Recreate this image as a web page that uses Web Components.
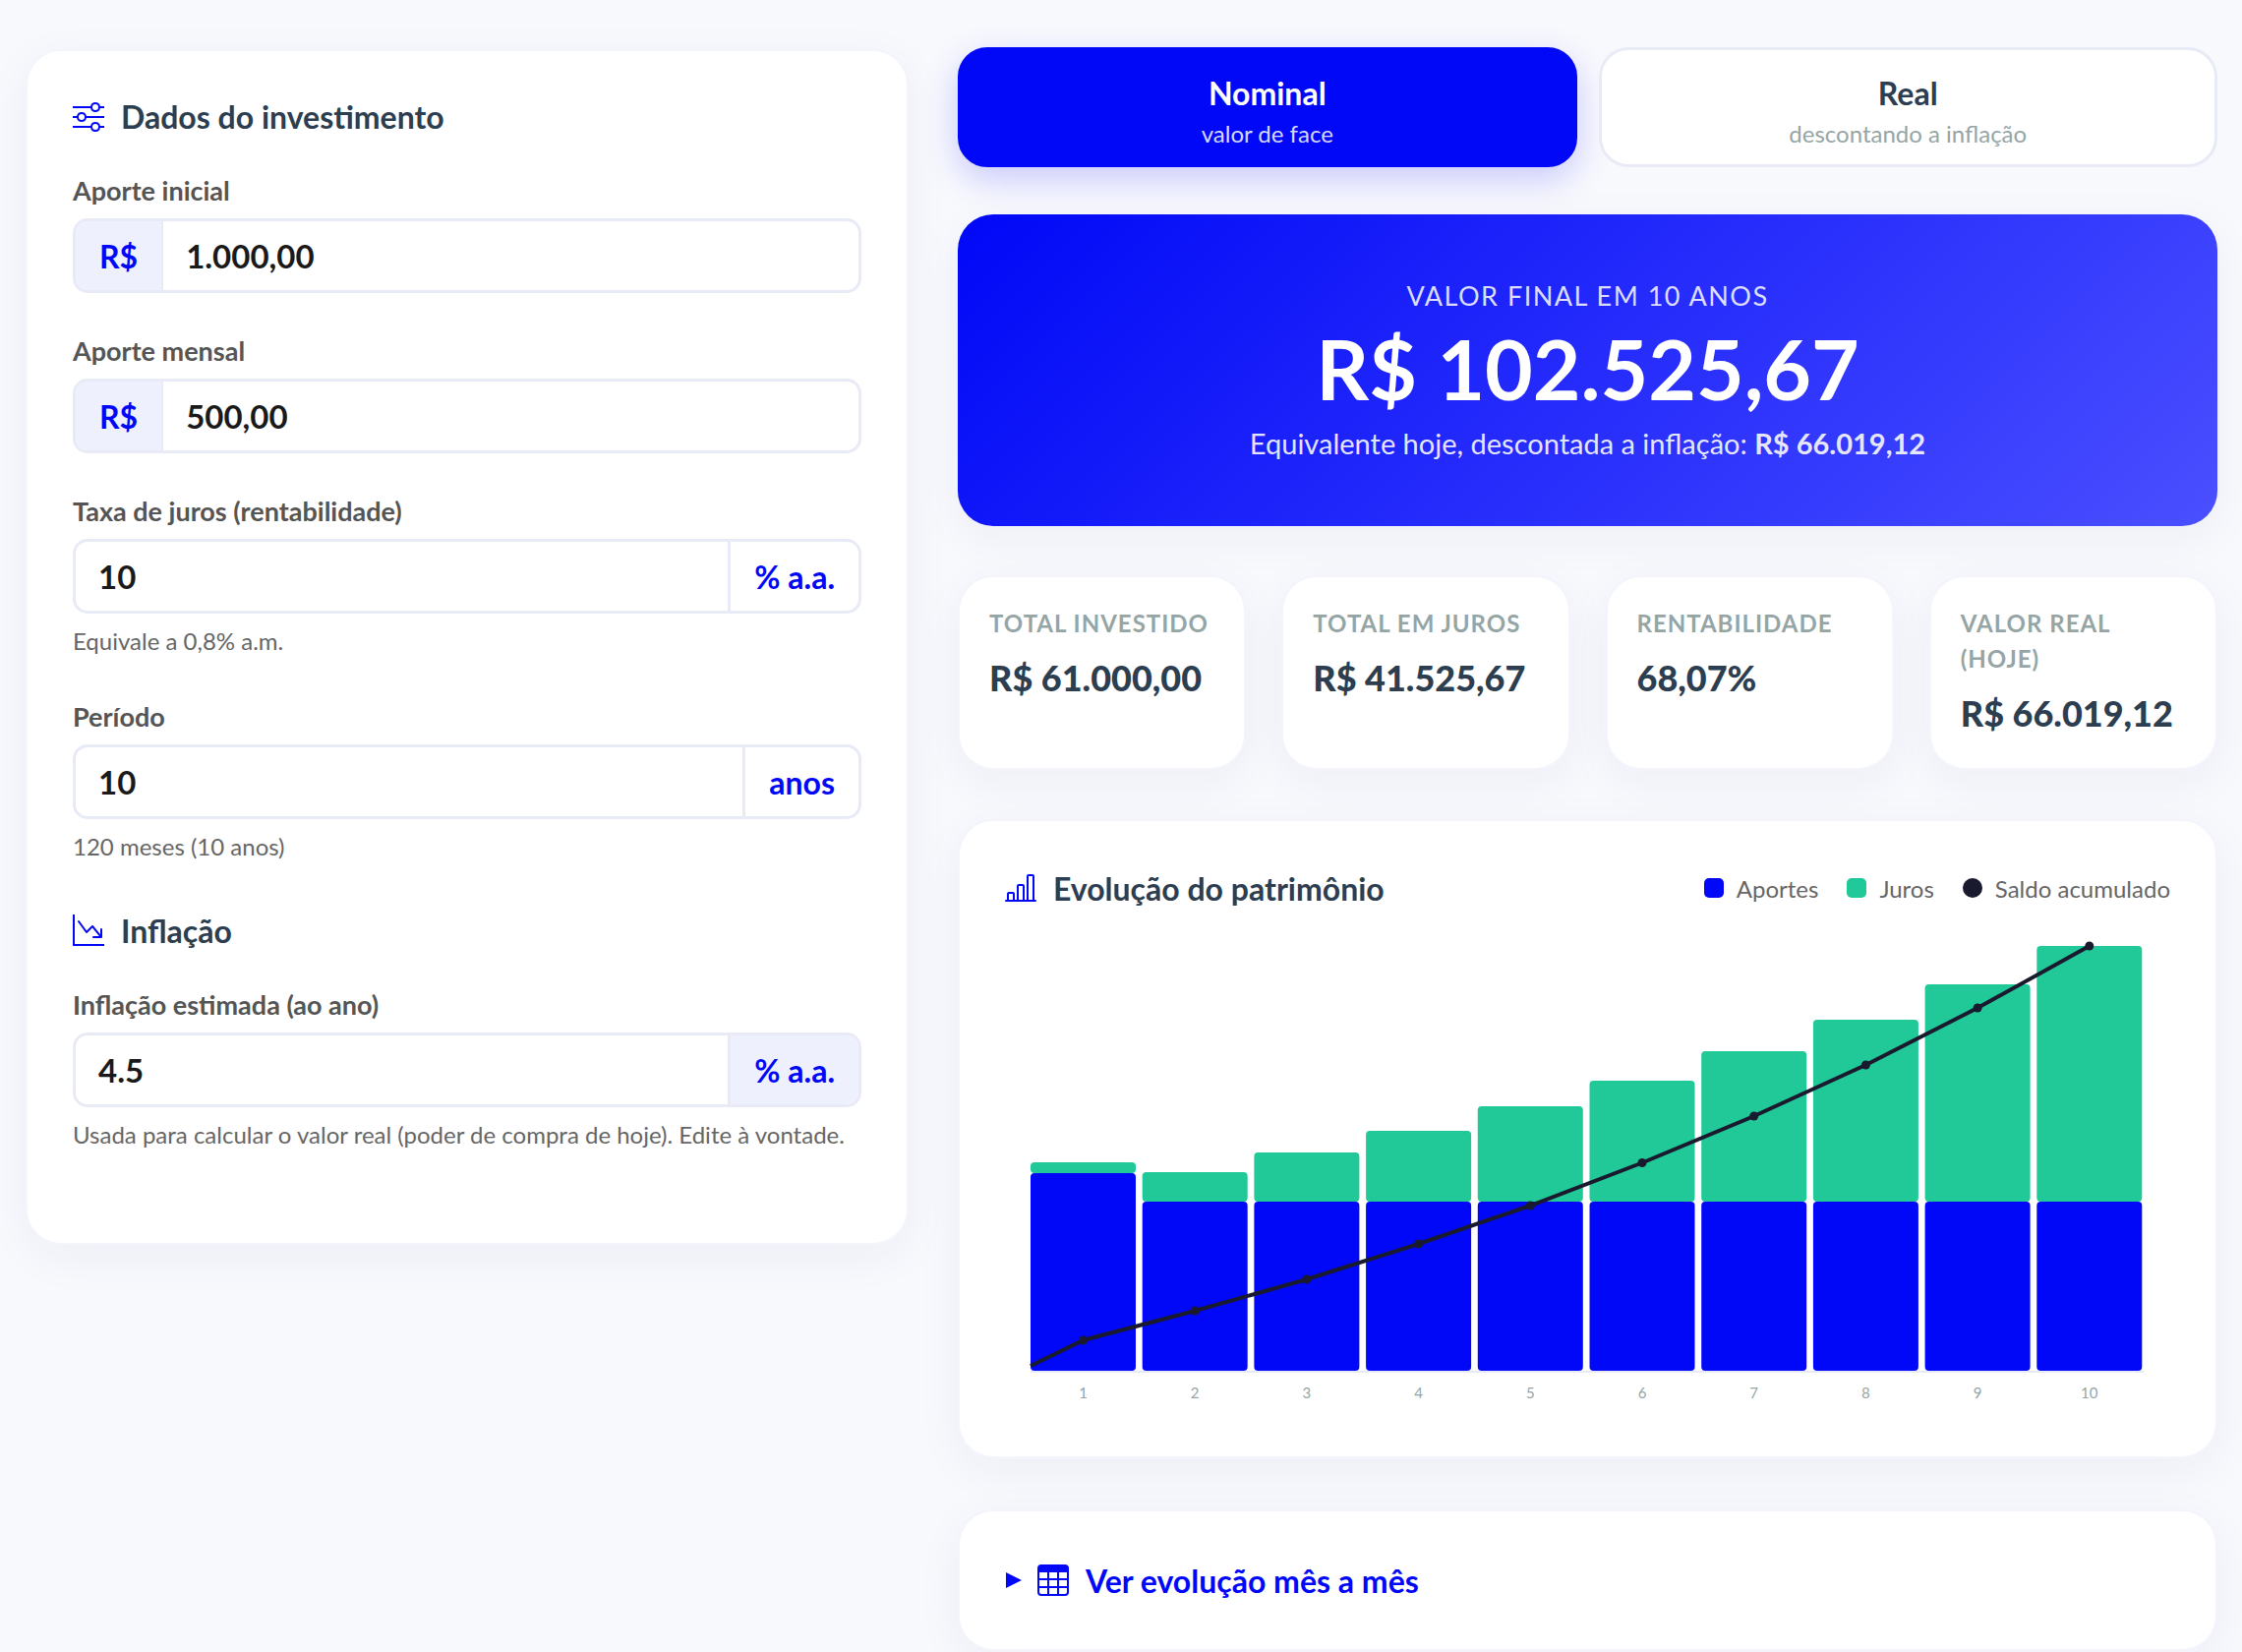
<!DOCTYPE html>
<html lang="pt-BR">
<head>
<meta charset="utf-8">
<title>Simulador</title>
<style>
    html, body { margin: 0; background: #f8f9fd; }
    body { font-family: "Lato", "Noto Sans", sans-serif; color: #2c3e50; }
</style>
</head>
<body>
<sim-page>
    <app-card slot="side" class="side">
        <section-title icon="sliders">Dados do investimento</section-title>
        <input-field label="Aporte inicial" prefix="R$">1.000,00</input-field>
        <input-field label="Aporte mensal" prefix="R$">500,00</input-field>
        <input-field label="Taxa de juros (rentabilidade)" suffix="% a.a." hint="Equivale a 0,8% a.m.">10</input-field>
        <input-field label="Período" suffix="anos" hint="120 meses (10 anos)">10</input-field>
        <section-title icon="graphDown" class="sub">Inflação</section-title>
        <input-field label="Inflação estimada (ao ano)" suffix="% a.a." shaded hint="Usada para calcular o valor real (poder de compra de hoje). Edite à vontade.">4.5</input-field>
    </app-card>

    <mode-tabs slot="main">
        <mode-tab active caption="valor de face">Nominal</mode-tab>
        <mode-tab caption="descontando a inflação">Real</mode-tab>
    </mode-tabs>

    <hero-result slot="main"
        label="VALOR FINAL EM 10 ANOS"
        amount="R$ 102.525,67"
        note="Equivalente hoje, descontada a inflação:"
        real="R$ 66.019,12"></hero-result>

    <stat-grid slot="main">
        <stat-card label="TOTAL INVESTIDO">R$ 61.000,00</stat-card>
        <stat-card label="TOTAL EM JUROS">R$ 41.525,67</stat-card>
        <stat-card label="RENTABILIDADE">68,07%</stat-card>
        <stat-card label="VALOR REAL (HOJE)">R$ 66.019,12</stat-card>
    </stat-grid>

    <wealth-chart slot="main"></wealth-chart>

    <month-details slot="main">Ver evolução mês a mês</month-details>
</sim-page>

<script>
const BLUE = '#0008f7';
const GREEN = '#21c998';
const INK = '#1a1a2e';

const icons = {
    sliders: '<path fill-rule="evenodd" d="M11.5 2a1.5 1.5 0 1 0 0 3 1.5 1.5 0 0 0 0-3zM9.05 3a2.5 2.5 0 0 1 4.9 0H16v1h-2.05a2.5 2.5 0 0 1-4.9 0H0V3h9.05zM4.5 7a1.5 1.5 0 1 0 0 3 1.5 1.5 0 0 0 0-3zM2.05 8a2.5 2.5 0 0 1 4.9 0H16v1H6.95a2.5 2.5 0 0 1-4.9 0H0V8h2.05zm9.45 4a1.5 1.5 0 1 0 0 3 1.5 1.5 0 0 0 0-3zm-2.45 1a2.5 2.5 0 0 1 4.9 0H16v1h-2.05a2.5 2.5 0 0 1-4.9 0H0v-1h9.05z"/>',
    graphDown: '<path fill-rule="evenodd" d="M0 0h1v15h15v1H0V0zm10 11.5a.5.5 0 0 0 .5.5h4a.5.5 0 0 0 .5-.5v-4a.5.5 0 0 0-1 0v2.6l-3.613-4.417a.5.5 0 0 0-.74-.037L7.06 8.233 3.404 3.206a.5.5 0 0 0-.808.588l4 5.5a.5.5 0 0 0 .758.06l2.609-2.61L13.445 11H10.5a.5.5 0 0 0-.5.5z"/>',
    barChart: '<path d="M11 2a1 1 0 0 1 1-1h2a1 1 0 0 1 1 1v12h.5a.5.5 0 0 1 0 1H.5a.5.5 0 0 1 0-1H1v-3a1 1 0 0 1 1-1h2a1 1 0 0 1 1 1v3h1V7a1 1 0 0 1 1-1h2a1 1 0 0 1 1 1v7h1V2zm1 12h2V2h-2v12zm-3 0V7H7v7h2zm-5 0v-3H2v3h2z"/>',
    table: '<path d="M0 2a2 2 0 0 1 2-2h12a2 2 0 0 1 2 2v12a2 2 0 0 1-2 2H2a2 2 0 0 1-2-2V2zm15 2h-4v3h4V4zm0 4h-4v3h4V8zm0 4h-4v3h3a1 1 0 0 0 1-1v-2zm-5 3v-3H6v3h4zm-5 0v-3H1v2a1 1 0 0 0 1 1h3zm-4-4h4V8H1v3zm0-4h4V4H1v3zm5-3v3h4V4H6zm4 4H6v3h4V8z"/>'
};

const icon = name => `<svg width="32" height="32" viewBox="0 0 16 16" fill="${BLUE}">${icons[name]}</svg>`;

// small helper so each element just declares its markup
class Base extends HTMLElement {
    constructor(html) {
        super();
        this.root = this.attachShadow({mode: 'open'});
        this.root.innerHTML = html;
    }
    fill(selector, text) {
        const el = this.root.querySelector(selector);
        if (text) el.textContent = text;
        else el.remove();
    }
}

customElements.define('sim-page', class extends Base {
    constructor() {
        super(`
        <style>
            :host {
                display: grid;
                grid-template-columns: 898px 1281px;
                column-gap: 50px;
                align-items: start;
                padding: 48px 25px 0 26px;
                box-sizing: border-box;
                width: 2280px;
                height: 1680px;
                overflow: hidden;
            }
            .main { display: flex; flex-direction: column; }
        </style>
        <slot name="side"></slot>
        <div class="main"><slot name="main"></slot></div>`);
    }
});

customElements.define('app-card', class extends Base {
    constructor() {
        super(`
        <style>
            :host {
                display: block;
                box-sizing: border-box;
                height: 1216px;
                margin-top: 2px;
                padding: 46px 46px 0;
                background: #fff;
                border: 2px solid #f3f4fc;
                border-radius: 36px;
                box-shadow: 0 12px 48px rgba(30, 40, 120, .05);
            }
        </style>
        <slot></slot>`);
    }
});

customElements.define('section-title', class extends Base {
    constructor() {
        super(`
        <style>
            :host(.sub) { margin-top: 47px; }
            :host {
                display: flex;
                align-items: center;
                gap: 17px;
                height: 40px;
                margin-bottom: 39px;
                font-size: 32px;
                font-weight: 700;
                color: #2c3e50;
            }
            svg { flex: none; }
        </style>
        <span class="ico"></span><span><slot></slot></span>`);
        this.root.querySelector('.ico').style.display = 'flex';
    }
    connectedCallback() {
        this.root.querySelector('.ico').innerHTML = icon(this.getAttribute('icon'));
    }
});

customElements.define('input-field', class extends Base {
    constructor() {
        super(`
        <style>
            :host { display: block; margin-bottom: 42px; }
            :host(:last-child) { margin-bottom: 0; }
            label {
                display: block;
                height: 34px;
                line-height: 34px;
                margin-bottom: 11px;
                font-size: 27px;
                font-weight: 700;
                color: #555;
            }
            .box {
                display: flex;
                box-sizing: border-box;
                height: 76px;
                background: #fff;
                border: 3px solid #e8eaf6;
                border-radius: 15px;
                overflow: hidden;
            }
            .value {
                flex: 1;
                display: flex;
                align-items: center;
                padding: 0 23px;
                font-size: 33px;
                font-weight: 700;
                color: #1a1a1a;
            }
            .addon {
                display: flex;
                align-items: center;
                padding: 0 24px;
                font-size: 32px;
                font-weight: 700;
                color: ${BLUE};
            }
            .prefix { background: #eef0fd; border-right: 2px solid #e8eaf6; }
            .suffix { border-left: 3px solid #e8eaf6; }
            :host([shaded]) .suffix { background: #eef0fd; }
            .hint {
                margin-top: 9px;
                font-size: 24px;
                line-height: 37px;
                color: #666;
            }
        </style>
        <label></label>
        <div class="box">
            <span class="addon prefix"></span>
            <span class="value"><slot></slot></span>
            <span class="addon suffix"></span>
        </div>
        <div class="hint"></div>`);
    }
    connectedCallback() {
        this.fill('label', this.getAttribute('label'));
        this.fill('.prefix', this.getAttribute('prefix'));
        this.fill('.suffix', this.getAttribute('suffix'));
        this.fill('.hint', this.getAttribute('hint'));
    }
});

customElements.define('mode-tabs', class extends Base {
    constructor() {
        super(`
        <style>
            :host { display: grid; grid-template-columns: 1fr 1fr; gap: 22px; margin-bottom: 48px; }
        </style>
        <slot></slot>`);
    }
});

customElements.define('mode-tab', class extends Base {
    constructor() {
        super(`
        <style>
            :host {
                display: flex;
                flex-direction: column;
                align-items: center;
                box-sizing: border-box;
                height: 122px;
                padding-top: 24px;
                background: #fff;
                border: 3px solid #e8eaf6;
                border-radius: 30px;
                color: #2c3e50;
            }
            :host([active]) {
                background: ${BLUE};
                border-color: ${BLUE};
                color: #fff;
                box-shadow: 0 12px 36px rgba(0, 8, 247, .2);
            }
            .title { font-size: 32px; font-weight: 700; line-height: 40px; }
            .caption { margin-top: 6px; font-size: 24px; line-height: 30px; color: #95a5a6; }
            :host([active]) .caption { color: rgba(255, 255, 255, .85); }
        </style>
        <div class="title"><slot></slot></div>
        <div class="caption"></div>`);
    }
    connectedCallback() {
        this.fill('.caption', this.getAttribute('caption'));
    }
});

customElements.define('hero-result', class extends Base {
    constructor() {
        super(`
        <style>
            :host {
                display: block;
                box-sizing: border-box;
                height: 317px;
                margin-bottom: 50px;
                padding-top: 63px;
                text-align: center;
                color: #fff;
                background: linear-gradient(135deg, ${BLUE}, #4a4fff);
                border-radius: 36px;
                box-shadow: 0 12px 48px rgba(30, 40, 120, .05);
            }
            .label { font-size: 27px; line-height: 40px; letter-spacing: 1.5px; color: rgba(255, 255, 255, .85); }
            .amount { margin-top: 4px; font-size: 84px; line-height: 100px; font-weight: 700; }
            .note { margin-top: 4px; font-size: 29px; line-height: 44px; color: rgba(255, 255, 255, .9); }
            b { font-weight: 700; }
        </style>
        <div class="label"></div>
        <div class="amount"></div>
        <div class="note"><span></span> <b></b></div>`);
    }
    connectedCallback() {
        this.fill('.label', this.getAttribute('label'));
        this.fill('.amount', this.getAttribute('amount'));
        this.fill('.note span', this.getAttribute('note'));
        this.fill('.note b', this.getAttribute('real'));
    }
});

customElements.define('stat-grid', class extends Base {
    constructor() {
        super(`
        <style>
            :host { display: grid; grid-template-columns: repeat(4, 1fr); gap: 36px; margin-bottom: 50px; }
        </style>
        <slot></slot>`);
    }
});

customElements.define('stat-card', class extends Base {
    constructor() {
        super(`
        <style>
            :host {
                display: block;
                box-sizing: border-box;
                height: 198px;
                padding: 29px 30px 0;
                background: #fff;
                border: 2px solid #f3f4fc;
                border-radius: 36px;
                box-shadow: 0 12px 48px rgba(30, 40, 120, .05);
            }
            .label { font-size: 24px; line-height: 36px; font-weight: 700; letter-spacing: 1px; color: #95a5a6; }
            .value { margin-top: 13px; font-size: 36px; line-height: 48px; font-weight: 900; color: #2c3e50; white-space: nowrap; }
        </style>
        <div class="label"></div>
        <div class="value"><slot></slot></div>`);
    }
    connectedCallback() {
        this.fill('.label', this.getAttribute('label'));
    }
});

// bars are [top of juros, top of aportes], line is the saldo at each year end
const BARS = [[1181, 1192], [1191, 1221], [1171, 1221], [1149, 1221], [1124, 1221],
              [1098, 1221], [1068, 1221], [1036, 1221], [1000, 1221], [961, 1221]];
const SALDO = [1362, 1332, 1300, 1264, 1225, 1181.5, 1134, 1082, 1024, 961];
const BASE_Y = 1393;
const BAR_X = 1049;
const BAR_W = 107;
const BAR_STEP = 113.7;

customElements.define('wealth-chart', class extends Base {
    constructor() {
        const cx = i => BAR_X + BAR_W / 2 + i * BAR_STEP;
        const bars = BARS.map(([juros, aportes], i) => {
            const x = BAR_X + i * BAR_STEP;
            return `<rect x="${x}" y="${juros}" width="${BAR_W}" height="${aportes - juros}" rx="4" fill="${GREEN}"/>
                <rect x="${x}" y="${aportes}" width="${BAR_W}" height="${BASE_Y - aportes}" rx="4" fill="${BLUE}"/>
                <text x="${cx(i)}" y="1421" text-anchor="middle" font-size="15" fill="#95a5a6">${i + 1}</text>`;
        }).join('');
        const points = [`${BAR_X},1388`].concat(SALDO.map((y, i) => `${cx(i)},${y}`)).join(' ');
        const dots = SALDO.map((y, i) => `<circle cx="${cx(i)}" cy="${y}" r="4.5" fill="${INK}"/>`).join('');
        super(`
        <style>
            :host {
                display: block;
                box-sizing: border-box;
                height: 650px;
                margin-bottom: 52px;
                padding: 48px 46px 0;
                background: #fff;
                border: 2px solid #f3f4fc;
                border-radius: 36px;
                box-shadow: 0 12px 48px rgba(30, 40, 120, .05);
            }
            header { display: flex; align-items: center; height: 40px; margin-bottom: 8px; }
            h2 {
                display: flex;
                align-items: center;
                gap: 17px;
                margin: 0 auto 0 0;
                font-size: 32px;
                font-weight: 700;
                color: #2c3e50;
            }
            .legend { display: flex; align-items: center; font-size: 24px; color: #666; }
            .legend i { width: 20px; height: 20px; margin-right: 13px; border-radius: 5px; }
            .legend span { margin-right: 29px; }
            .legend span:last-child { margin-right: 0; }
            svg { display: block; }
            svg text { font-family: "Lato", sans-serif; }
        </style>
        <header>
            <h2>${icon('barChart')}Evolução do patrimônio</h2>
            <div class="legend">
                <i style="background:${BLUE}"></i><span>Aportes</span>
                <i style="background:${GREEN}"></i><span>Juros</span>
                <i style="background:${INK};border-radius:50%"></i><span>Saldo acumulado</span>
            </div>
        </header>
        <svg width="1183" height="510" viewBox="1023 930 1183 510">
            <line x1="1049" x2="2181" y1="1394" y2="1394" stroke="#e8eaf6" stroke-width="2"/>
            ${bars}
            <polyline points="${points}" fill="none" stroke="${INK}" stroke-width="4"/>
            ${dots}
        </svg>`);
    }
});

customElements.define('month-details', class extends Base {
    constructor() {
        super(`
        <style>
            :host {
                display: flex;
                align-items: center;
                box-sizing: border-box;
                height: 144px;
                padding: 0 46px;
                background: #fff;
                border: 2px solid #f3f4fc;
                border-radius: 36px;
                box-shadow: 0 12px 48px rgba(30, 40, 120, .05);
                font-size: 32px;
                font-weight: 700;
                color: ${BLUE};
            }
            .arrow { width: 16px; height: 16px; margin: 0 16px 0 1px; }
            svg { flex: none; }
            span { margin-left: 17px; }
        </style>
        <svg class="arrow" viewBox="0 0 16 16" fill="${BLUE}"><path d="M0 0 16 8 0 16z"/></svg>
        ${icon('table')}<span><slot></slot></span>`);
    }
});
</script>
</body>
</html>
